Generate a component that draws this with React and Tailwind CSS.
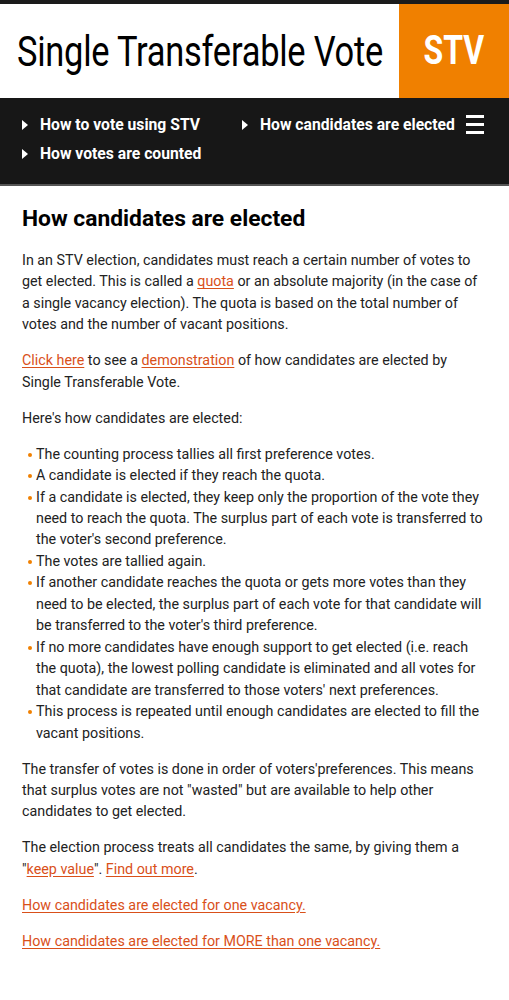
import React from 'react';

const ORANGE = '#f08000';

const NavItem = ({ label }) => (
  <a href="#" className="flex items-center gap-[12px] text-white font-bold text-[15.7px] leading-[29px]">
    <span className="inline-block w-0 h-0 border-y-[5px] border-y-transparent border-l-[6px] border-l-white" />
    {label}
  </a>
);

const Link = ({ children }) => (
  <a href="#" className="text-[#d9501a] underline underline-offset-2">{children}</a>
);

const steps = [
  'The counting process tallies all first preference votes.',
  'A candidate is elected if they reach the quota.',
  "If a candidate is elected, they keep only the proportion of the vote they need to reach the quota. The surplus part of each vote is transferred to the voter's second preference.",
  'The votes are tallied again.',
  "If another candidate reaches the quota or gets more votes than they need to be elected, the surplus part of each vote for that candidate will be transferred to the voter's third preference.",
  "If no more candidates have enough support to get elected (i.e. reach the quota), the lowest polling candidate is eliminated and all votes for that candidate are transferred to those voters' next preferences.",
  'This process is repeated until enough candidates are elected to fill the vacant positions.',
];

export default function App() {
  return (
    <div className="min-h-[1000px] bg-white font-['Roboto',sans-serif] text-[#222]">
      <div className="h-[4px] bg-[#1b1b1b]" />

      {/* HEADER */}
      <header className="flex h-[94px]">
        <h1 className="flex-1 flex items-center pl-[17px] overflow-hidden">
          <span className="inline-block whitespace-nowrap origin-left scale-x-[0.82] text-[42px] text-black tracking-[-0.3px]">
            Single Transferable Vote
          </span>
        </h1>
        <div className="w-[110px] flex items-center justify-center" style={{ backgroundColor: ORANGE }}>
          <span className="inline-block scale-x-[0.8] text-white font-bold text-[40px]">STV</span>
        </div>
      </header>

      {/* NAV */}
      <nav className="bg-[#171717] border-b-2 border-[#555] pl-[22px] pr-[25px] pt-3 pb-4 flex items-start">
        <div className="grid grid-cols-[220px_1fr] flex-1">
          <NavItem label="How to vote using STV" />
          <NavItem label="How candidates are elected" />
          <NavItem label="How votes are counted" />
        </div>
        <button className="mt-[5px] flex flex-col gap-[5px]">
          <span className="block w-[18px] h-[3px] bg-white" />
          <span className="block w-[18px] h-[3px] bg-white" />
          <span className="block w-[18px] h-[3px] bg-white" />
        </button>
      </nav>

      {/* CONTENT */}
      <main className="px-[22px] pt-[19px] text-[14.3px] leading-[21.45px]">
        <h2 className="text-[22.8px] font-bold text-black leading-[28px] mb-[17px]">How candidates are elected</h2>

        <p className="mb-[14.5px]">
          In an STV election, candidates must reach a certain number of votes to get elected. This is called a <Link>quota</Link> or an absolute majority (in the case of a single vacancy election). The quota is based on the total number of votes and the number of vacant positions.
        </p>

        <p className="mb-[14.5px]">
          <Link>Click here</Link> to see a <Link>demonstration</Link> of how candidates are elected by Single Transferable Vote.
        </p>

        <p className="mb-[14.5px]">Here's how candidates are elected:</p>

        <ul className="mb-[14.5px]">
          {steps.map((s, i) => (
            <li key={i} className="flex">
              <span className="w-[14px] shrink-0 flex justify-start pl-[6px] pt-[9px]">
                <span className="block w-[4px] h-[4px] rounded-full" style={{ backgroundColor: ORANGE }} />
              </span>
              <span>{s}</span>
            </li>
          ))}
        </ul>

        <p className="mb-[14.5px]">
          The transfer of votes is done in order of voters'preferences. This means that surplus votes are not "wasted" but are available to help other candidates to get elected.
        </p>

        <p className="mb-[14.5px]">
          The election process treats all candidates the same, by giving them a "<Link>keep value</Link>". <Link>Find out more</Link>.
        </p>

        <p className="mb-[14.5px]"><Link>How candidates are elected for one vacancy.</Link></p>

        <p className="mb-[14.5px]"><Link>How candidates are elected for MORE than one vacancy.</Link></p>
      </main>
    </div>
  );
}
